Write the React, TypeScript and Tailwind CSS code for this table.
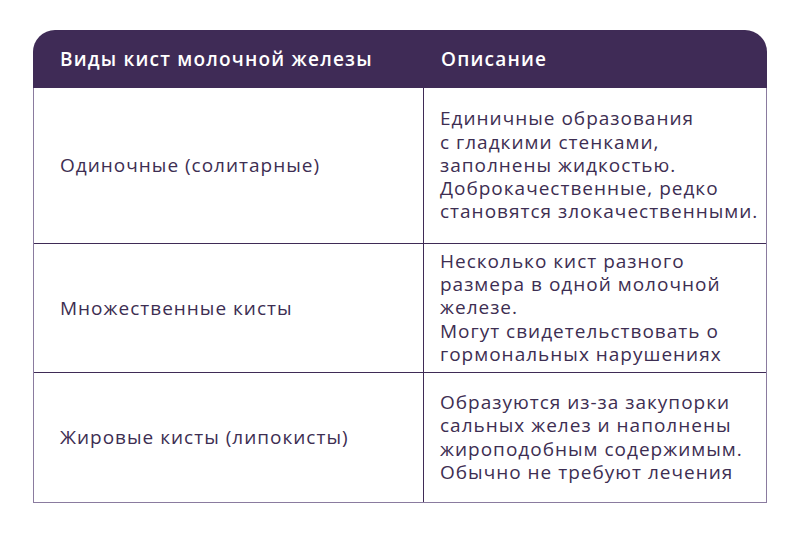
import React from "react";

const rows = [
  {
    name: "Одиночные (солитарные)",
    desc: ["Единичные образования", "с гладкими стенками,", "заполнены жидкостью.", "Доброкачественные, редко", "становятся злокачественными."],
    h: "h-[155px]",
  },
  {
    name: "Множественные кисты",
    desc: ["Несколько кист разного", "размера в одной молочной", "железе.", "Могут свидетельствовать о", "гормональных нарушениях"],
    h: "h-[129px]",
  },
  {
    name: "Жировые кисты (липокисты)",
    desc: ["Образуются из-за закупорки", "сальных желез и наполнены", "жироподобным содержимым.", "Обычно не требуют лечения"],
    h: "h-[130px]",
  },
];

export default function App() {
  return (
    <div
      className="w-[800px] h-[533px] bg-white pt-[30px] pl-[33px]"
      style={{ fontFamily: '"Open Sans", "Noto Sans", sans-serif' }}
    >
      <div className="w-[734px]">
        <div className="grid grid-cols-[391px_343px] h-[58px] bg-[#3f2b56] rounded-t-[22px] text-white text-[19px] tracking-[1.2px] font-semibold items-center">
          <div className="pl-[27px]">Виды кист молочной железы</div>
          <div className="pl-[17px]">Описание</div>
        </div>
        <div className="border-x border-b border-[#8a7b9f]">
          {rows.map((r, i) => (
            <div
              key={i}
              className={`grid grid-cols-[390px_342px] ${r.h} ${i > 0 ? "border-t border-[#3f2b56]" : ""} text-[#3d2e52] text-[19px] tracking-[1px]`}
            >
              <div className="flex items-center pl-[26px] border-r border-[#3f2b56]">{r.name}</div>
              <div className="flex flex-col justify-center pl-[16px] leading-[23.3px]">
                {r.desc.map((l, j) => (
                  <div key={j}>{l}</div>
                ))}
              </div>
            </div>
          ))}
        </div>
      </div>
    </div>
  );
}
